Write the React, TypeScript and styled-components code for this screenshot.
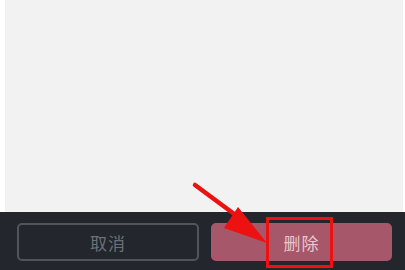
import React from "react"
import styled, {createGlobalStyle} from "styled-components"

const GlobalStyle = createGlobalStyle`
  html, body {
    margin: 0;
    padding: 0;
    background: #ffffff;
  }
  body {
    font-family: "Noto Sans CJK SC", "Noto Sans", sans-serif;
  }
`

export default function App() {
    return (
        <>
            <GlobalStyle/>
            <Screen>
                <Content/>
                <Footer>
                    <ActionButton $variant="cancel">取消</ActionButton>
                    <ActionButton $variant="danger">删除</ActionButton>
                </Footer>

                {/* annotation laid over the screenshot */}
                <Highlight/>
                <Arrow width="405" height="270" viewBox="0 0 405 270">
                    <line x1="195" y1="185" x2="245" y2="222" stroke="#ee1111" strokeWidth="4.5" strokeLinecap="round"/>
                    <polygon points="267,243 238,207 224,228" fill="#ee1111"/>
                </Arrow>
            </Screen>
        </>
    )
}

const Screen = styled.div`
  position: relative;
  width: 405px;
  height: 270px;
  display: flex;
  flex-direction: column;
  overflow: hidden;
`
const Content = styled.div`
  flex: 1;
  margin: 0 2px 0 5px;
  background: #f2f2f2;
`
const Footer = styled.div`
  height: 58px;
  box-sizing: border-box;
  padding: 11px 13px 9px 17px;
  background: #23272d;
  display: grid;
  grid-template-columns: 182px 181px;
  gap: 12px;
`
const ActionButton = styled.div<{ $variant: "cancel" | "danger" }>`
  box-sizing: border-box;
  height: 38px;
  border-radius: 5px;
  display: flex;
  align-items: center;
  justify-content: center;
  font-size: 17px;
  letter-spacing: 1px;
  border: 2px solid ${p => p.$variant === "cancel" ? "#50555c" : "#a6576a"};
  background: ${p => p.$variant === "cancel" ? "#23272d" : "#a6576a"};
  color: ${p => p.$variant === "cancel" ? "#6c7178" : "#e8c6ce"};
`
const Highlight = styled.div`
  position: absolute;
  left: 266px;
  top: 217px;
  width: 67px;
  height: 51px;
  box-sizing: border-box;
  border: 3.5px solid #ee1111;
`
const Arrow = styled.svg`
  position: absolute;
  left: 0;
  top: 0;
  pointer-events: none;
`
